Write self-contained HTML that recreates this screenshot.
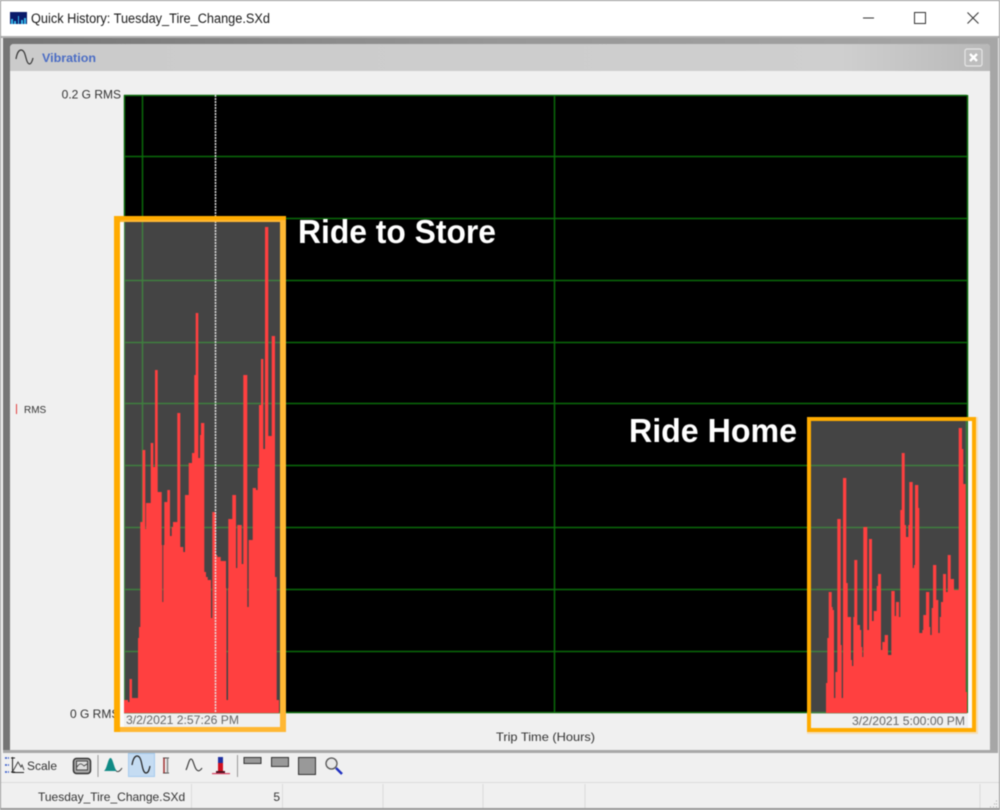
<!DOCTYPE html>
<html><head><meta charset="utf-8"><style>
html,body{margin:0;padding:0;background:#f0f0f0}
svg{display:block;filter:blur(.4px)}
text{font-family:"Liberation Sans",sans-serif}
</style></head><body>
<svg width="1000" height="810" viewBox="0 0 1000 810" xmlns="http://www.w3.org/2000/svg">
<defs>
<linearGradient id="fr" x1="0" x2="1" y1="0" y2="0"><stop offset="0" stop-color="#757575"/><stop offset=".5" stop-color="#979797"/><stop offset="1" stop-color="#a6a6a6"/></linearGradient>
<linearGradient id="hd" x1="0" x2="1" y1="0" y2="0"><stop offset="0" stop-color="#cbcbcb"/><stop offset=".85" stop-color="#cfcfcf"/><stop offset="1" stop-color="#b8b8b8"/></linearGradient>
</defs>
<rect width="1000" height="810" fill="#f0f0f0"/>
<!-- title bar -->
<rect width="1000" height="36" fill="#fff"/>
<rect x="10" y="12" width="17" height="12" fill="#0a1a6a"/>
<path d="M11 24V19H13V24ZM14 24V21H16V24ZM18 24V16H19V24ZM21 24V20H23V24ZM24 24V18H26V24Z" fill="#35b7e8"/>
<text x="31" y="23" font-size="13.5" fill="#1a1a1a" textLength="239" lengthAdjust="spacingAndGlyphs">Quick History: Tuesday_Tire_Change.SXd</text>
<rect x="863" y="17.5" width="11" height="1" fill="#333"/>
<rect x="914.5" y="12.5" width="11" height="11" fill="none" stroke="#333" stroke-width="1"/>
<path d="M967.5 12.5L978.5 23.5M978.5 12.5L967.5 23.5" stroke="#333" stroke-width="1" fill="none"/>
<!-- frame -->
<rect x="1" y="36" width="998" height="2" fill="#b0b0b0"/>
<rect x="3" y="38" width="995" height="715" fill="url(#fr)"/>
<rect x="1" y="38" width="2" height="715" fill="#f5f5f5"/>
<path d="M10 750V48Q10 44 14 44H986Q990 44 990 48V750Z" fill="#f0f0f0"/>
<path d="M10 71V48Q10 44 14 44H986Q990 44 990 48V71Z" fill="url(#hd)"/>
<path d="M16 59C17 53 19 50 21 50C24 50 25 54 26 58C27 62 28 64 29.500 64C31 64 32 62 33 58" fill="none" stroke="#333" stroke-width="1.200"/>
<text x="42" y="62" font-size="12" font-weight="bold" fill="#4a6cc4" textLength="54" lengthAdjust="spacingAndGlyphs">Vibration</text>
<rect x="965" y="49" width="17" height="17" rx="2" fill="#bdbdbd" stroke="#e6e6e6" stroke-width="1.200"/>
<path d="M970 54L977 61M977 54L970 61" stroke="#fff" stroke-width="2.400"/>
<rect x="3" y="750" width="995" height="3" fill="#a8a8a8"/>
<rect x="0" y="753" width="1000" height="57" fill="#f0f0f0"/>
<!-- axis labels -->
<text x="121" y="98.500" font-size="12" text-anchor="end" fill="#333">0.2 G RMS</text>
<text x="70" y="718" font-size="12" fill="#333">0 G RMS</text>
<rect x="16" y="404" width="1" height="10" fill="#e04040"/>
<text x="24" y="413" font-size="10" fill="#333">RMS</text>
<text x="496" y="741" font-size="12" fill="#333" textLength="99" lengthAdjust="spacingAndGlyphs">Trip Time (Hours)</text>
<!-- plot -->
<rect x="124" y="95" width="843" height="618" fill="#000"/>
<g stroke="#0a6a0a" stroke-width="1.500" fill="none">
<path d="M124 95.500H967M124 156.500H967M124 218.500H967M124 280.500H967M124 342.500H967M124 403.500H967M124 465.500H967M124 527.500H967M124 589.500H967M124 651.500H967M124 712.500H967"/>
<path d="M124.500 95V713M142.500 95V713M554.500 95V713M967.500 95V713"/>
</g>
<!-- highlight panels -->
<rect x="124" y="222" width="156" height="491" fill="#444"/>
<rect x="811" y="421" width="156" height="292" fill="#444"/>
<g stroke="#3f7f3f" stroke-width="1.500" fill="none">
<path d="M124 280.500H280M124 342.500H280M124 403.500H280M124 465.500H280M124 527.500H280M124 589.500H280M124 651.500H280M124 712.500H280"/>
<path d="M124.500 222V713M142.500 222V713"/>
<path d="M811 465.500H967M811 527.500H967M811 589.500H967M811 651.500H967M811 712.500H967M966.500 421V713"/>
</g>
<path fill="#ff4040" d="M124 713V700H128V702H129.500V679H132V698H138V638H139V627H140.300V522H142.500V450H145.300V529H146V503H150.700V443H153.300V467H155V370H157.700V492H161.700V545H162.300V602H163.300V545H164.300V502H167.300V490H170V536H171.700V527H173V522H177.300V413H180.300V547H183.300V552H185V495H188.700V463H192V453H194.300V375H195.700V313H198.300V458H200V435H201V423H204.300V572H206V577H207.700V580H211V618H212.300V512H216V555H217.300V557H220.700V561H226V588H226.500V700H228V588H228.300V519H232.300V495H236V568H237.300V525H241.700V564H243.300V375H247.300V607H248.700V540H252.700V488H256V490H257.700V468H259V405H261V359H263.300V449H265V227H268.300V436H271.700V336H275V577H276.700V700H279V713Z"/>
<path fill="#ff4040" d="M826 713V683H827.300V638H828.700V592H831.700V607H832.700V610H834V698H835.300V672H837.300V519H840.700V645H841.700V698H843V478H846.300V583H847.700V617H851V660H852V666H853.300V617H854.300V560H857.300V625H860V630H861.300V647H862.300V657H863.300V527H867.300V630H869V539H872V621H873.700V611H876.700V586H878V574H881V650H882.300V642H884.700V635H888V655H891.300V591H894.700V616H896V602H899V617H900.300V510H901.700V453H904.700V525H906V537H908.300V525H909.300V482H912.700V568H914V565H915V485H918.300V508H919.300V633H922.300V630H923.300V615H926V592H929.300V627H930.300V635H931.700V608H933V565H936.300V600H938.300V633H939.700V617H941V602H943V574H946V592H947.700V555H950.700V579H954V590H958.700V428H962V449H963.300V484H965.700V692H967V713Z"/>
<path d="M215.500 95V713" stroke="#e8e8e8" stroke-width="1.500" stroke-dasharray="2 1" fill="none"/>
<!-- date labels -->
<rect x="120" y="222" width="4" height="505" fill="#fafafa"/>
<rect x="968" y="421" width="4" height="307" fill="#fafafa"/>
<text x="126" y="724" font-size="12" fill="#666" textLength="113" lengthAdjust="spacingAndGlyphs">3/2/2021 2:57:26 PM</text>
<text x="852" y="725" font-size="12" fill="#666" textLength="113" lengthAdjust="spacingAndGlyphs">3/2/2021 5:00:00 PM</text>
<!-- orange boxes -->
<rect x="280" y="216" width="6" height="516" fill="#ffb733"/>
<rect x="114" y="727" width="172" height="5" fill="#ffb733"/>
<rect x="114" y="216" width="6" height="516" fill="#ffab00"/>
<rect x="114" y="216" width="172" height="4" fill="#ffab00"/>
<rect x="120" y="220" width="166" height="2" fill="#ffb733"/>
<rect x="807" y="732" width="171" height="2" fill="#f5dfb8"/>
<rect x="976" y="417" width="2" height="317" fill="#f5dfb8"/>
<rect x="809" y="419" width="165" height="311" fill="none" stroke="#ffab00" stroke-width="4"/>
<!-- annotations -->
<text x="298" y="243" font-size="33" font-weight="bold" fill="#fff" textLength="198" lengthAdjust="spacingAndGlyphs">Ride to Store</text>
<text x="629" y="442" font-size="33" font-weight="bold" fill="#fff" textLength="168" lengthAdjust="spacingAndGlyphs">Ride Home</text>
<!-- toolbar -->
<path d="M5 758H9M5 765H9M5 772H9" stroke="#2a50c8" stroke-width="1.500" stroke-dasharray="2 1" fill="none"/>
<path d="M12.500 757V772.500H24M11 758H15M11 772H15" stroke="#222" stroke-width="1" fill="none"/>
<path d="M13 771L18 762L21 767L22 765L24 770" stroke="#444" stroke-width="1" fill="none"/>
<text x="27" y="770" font-size="11.500" fill="#333" textLength="30" lengthAdjust="spacingAndGlyphs">Scale</text>
<rect x="73.500" y="758.500" width="17" height="15" rx="3" fill="#aaa" stroke="#333" stroke-width="1.500"/>
<rect x="76.500" y="761" width="11" height="9" fill="#ddd" stroke="#444" stroke-width="1"/>
<path d="M77 767C80 762 82 764 84 766L87 764" stroke="#333" fill="none" stroke-width=".8"/>
<rect x="97.500" y="755" width="1" height="22" fill="#999"/>
<path d="M104 771C107 769 108 758 110.500 758C113 758 114 769 117 771Z" fill="#0f8a85"/>
<path d="M116 771Q119 773 122 768" stroke="#444" fill="none" stroke-width="1"/>
<rect x="128.500" y="753.500" width="26" height="23" fill="#c5dcf2" stroke="#a5cbee"/>
<path d="M132 765C133 759 135 756 137 756C140 756 141 760 142 765C143 770 144 773 146 773C148 773 149 771 150 766" fill="none" stroke="#222" stroke-width="1.200"/>
<path d="M163 758H169M163 773H169" stroke="#444" stroke-width="1" fill="none"/>
<path d="M164 758V773" stroke="#a03030" stroke-width="1.500"/>
<path d="M167.500 758V773" stroke="#888" stroke-width="1.500"/>
<path d="M186 770C188 766 189 759 191 759C193 759 194 766 196 769C198 772 200 771 202 768" fill="none" stroke="#333" stroke-width="1.100"/>
<rect x="218" y="757" width="5" height="12" fill="#2030a0"/>
<rect x="218" y="763" width="5" height="8" fill="#d01020"/>
<rect x="216" y="771" width="9" height="2" fill="#501020"/>
<rect x="212" y="773" width="18" height="1.200" fill="#d84060"/>
<rect x="237" y="755" width="1" height="22" fill="#999"/>
<rect x="244" y="757.500" width="17" height="6" fill="#999" stroke="#333"/>
<rect x="271.500" y="757.500" width="17" height="9" fill="#999" stroke="#333"/>
<rect x="298.500" y="757.500" width="17" height="17" fill="#999" stroke="#333"/>
<circle cx="331.500" cy="763.500" r="5.500" fill="#e8e8e8" stroke="#555" stroke-width="1.300"/>
<path d="M336 768L342 774" stroke="#2030c0" stroke-width="2.500"/>
<!-- status bar -->
<rect x="0" y="782" width="1000" height="1" fill="#dcdcdc"/>
<path d="M191.500 784V808M282.500 784V808M383 784V808M483 784V808M585 784V808M980 784V808" stroke="#dcdcdc" stroke-width="1" fill="none"/>
<text x="38" y="801" font-size="12" fill="#333">Tuesday_Tire_Change.SXd</text>
<text x="280" y="801" font-size="12" fill="#333" text-anchor="end">5</text>
<path d="M994 804h1M990 807h1M993 807h1M996 807h1M996 801h1M996 804h1" stroke="#aaa" fill="none"/>
<rect x="0" y="808" width="1000" height="2" fill="#999"/>
<rect x="0" y="0" width="1000" height="1" fill="#999"/>
<rect x="0" y="0" width="1" height="810" fill="#999"/>
<rect x="999" y="0" width="1" height="810" fill="#999"/>
</svg>
</body></html>
